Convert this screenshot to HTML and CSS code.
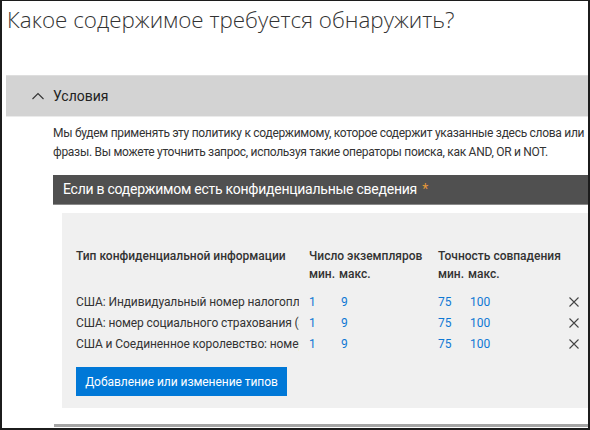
FILE: index.html
```html
<!DOCTYPE html>
<html lang="ru">
<head>
<meta charset="utf-8">
<link rel="stylesheet" href="styles.css">
</head>
<body>
<div class="frame">
  <h1 class="title">Какое содержимое требуется обнаружить?</h1>
  <div class="acc-head">
    <svg class="chev" width="12" height="8" viewBox="0 0 12 8"><polyline points="0.5,7 6,1.5 11.5,7" fill="none" stroke="#333" stroke-width="1.1"/></svg>
    <span>Условия</span>
  </div>
  <div class="acc-body">
    <p class="desc">Мы будем применять эту политику к содержимому, которое содержит указанные здесь слова или фразы. Вы можете уточнить запрос, используя такие операторы поиска, как AND, OR и NOT.</p>
    <div class="bar">Если в содержимом есть конфиденциальные сведения <span class="req">*</span></div>
    <div class="panel">
      <div class="grid">
        <div class="hd name">Тип конфиденциальной информации</div>
        <div class="hd">Число экземпляров<br><span class="sub"><span class="c">мин.</span>макс.</span></div>
        <div class="hd">Точность совпадения<br><span class="sub"><span class="c">мин.</span>макс.</span></div>
        <div></div>

        <div class="cell name"><span class="clip">США: Индивидуальный номер налогоплательщика (ITIN)</span></div>
        <div class="cell nums"><span class="n">1</span><span class="n">9</span></div>
        <div class="cell nums"><span class="n">75</span><span class="n">100</span></div>
        <div class="cell x"><svg width="10" height="10" viewBox="0 0 10 10"><path d="M0.5 0.5 L9.5 9.5 M9.5 0.5 L0.5 9.5" stroke="#444" stroke-width="1.1"/></svg></div>

        <div class="cell name"><span class="clip">США: номер социального страхования (SSN)</span></div>
        <div class="cell nums"><span class="n">1</span><span class="n">9</span></div>
        <div class="cell nums"><span class="n">75</span><span class="n">100</span></div>
        <div class="cell x"><svg width="10" height="10" viewBox="0 0 10 10"><path d="M0.5 0.5 L9.5 9.5 M9.5 0.5 L0.5 9.5" stroke="#444" stroke-width="1.1"/></svg></div>

        <div class="cell name"><span class="clip">США и Соединенное королевство: номер паспорта</span></div>
        <div class="cell nums"><span class="n">1</span><span class="n">9</span></div>
        <div class="cell nums"><span class="n">75</span><span class="n">100</span></div>
        <div class="cell x"><svg width="10" height="10" viewBox="0 0 10 10"><path d="M0.5 0.5 L9.5 9.5 M9.5 0.5 L0.5 9.5" stroke="#444" stroke-width="1.1"/></svg></div>
      </div>
      <button class="btn">Добавление или изменение типов</button>
    </div>
    <div class="next"></div>
  </div>
</div>
</body>
</html>
```
FILE: styles.css
```css
html, body {
  margin: 0;
  padding: 0;
  background: #fff;
}
.frame {
  width: 590px;
  height: 430px;
  box-sizing: border-box;
  border: 2px solid #1c1c1c;
  border-top-width: 1px;
  overflow: hidden;
  font-family: Roboto, "Open Sans", sans-serif;
  color: #333;
}
.title {
  margin: 0;
  padding: 4px 0 0 5px;
  height: 74px;
  box-sizing: border-box;
  font-family: "Open Sans", "Noto Sans", sans-serif;
  font-size: 22.4px;
  font-weight: 300;
  color: #333;
  line-height: 30px;
  white-space: nowrap;
}
.acc-head {
  margin-left: 4px;
  height: 40px;
  background: #d3d3d3;
  border-top: 1px solid #dedede;
  border-bottom: 1px solid #ebebeb;
  display: flex;
  align-items: center;
  padding-left: 26px;
  gap: 9px;
  font-size: 14px;
  color: #222;
}
.chev { display: block; margin-top: -1px; }
.acc-body {
  padding-left: 51px;
}
.desc {
  margin: 7px 0 0;
  font-size: 12px;
  letter-spacing: -0.29px;
  line-height: 19px;
  color: #333;
  width: 540px;
}
.bar {
  margin-top: 13px;
  height: 29px;
  background: #505050;
  border-bottom: 1px solid #8a8a8a;
  color: #fff;
  font-size: 14px;
  letter-spacing: -0.25px;
  line-height: 29px;
  padding-left: 10px;
  white-space: nowrap;
}
.req { color: #e3973a; margin-left: 2px; }
.panel {
  margin: 8px 0 0 9px;
  background: #f0f0f0;
  padding: 34px 0 12px 14px;
}
.grid {
  display: grid;
  grid-template-columns: 233px 129px minmax(0, 1fr) 28px;
  align-items: center;
  font-size: 12px;
}
.hd {
  font-weight: 500;
  line-height: 18px;
  align-self: start;
  color: #333;
  margin-bottom: 9px;
  white-space: nowrap;
}
.sub .c { display: inline-block; width: 30px; }
.clip {
  display: block;
  width: 223px;
  white-space: nowrap;
  overflow: hidden;
  letter-spacing: -0.1px;
}
.cell {
  height: 21px;
  line-height: 21px;
  color: #333;
}
.nums { display: flex; }
.n { width: 32px; color: #0f78d4; }
.x {
  display: flex;
  align-items: center;
  justify-content: center;
  padding-bottom: 2px;
  box-sizing: border-box;
}
.x svg { display: block; }
.btn {
  margin-top: 12px;
  height: 29px;
  width: 211px;
  padding: 0;
  background: #0078d7;
  color: #fff;
  border: none;
  font-family: Roboto, "Open Sans", sans-serif;
  font-size: 12px;
  letter-spacing: -0.05px;
  white-space: nowrap;
}
.next {
  margin: 16px 0 0 1px;
  height: 3px;
  background: #a5a5a5;
}
```
